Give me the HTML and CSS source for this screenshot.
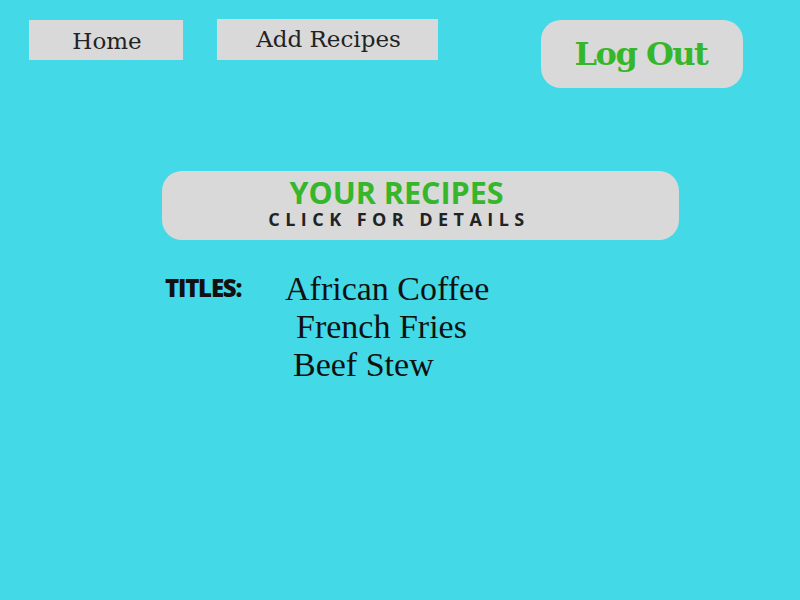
FILE: index.html
```html
<!DOCTYPE html>
<html>
<head>
<meta charset="utf-8">
<link rel="stylesheet" href="styles.css">
</head>
<body>
<header class="topbar">
  <a class="nav-btn home">Home</a>
  <a class="nav-btn add">Add Recipes</a>
  <a class="logout">Log Out</a>
</header>
<section class="panel">
  <h1 class="panel-title">YOUR RECIPES</h1>
  <p class="panel-sub">CLICK FOR DETAILS</p>
</section>
<section class="titles">
  <div class="label">TITLES:</div>
  <ul class="list">
    <li class="item i1">African Coffee</li>
    <li class="item i2">French Fries</li>
    <li class="item i3">Beef Stew</li>
  </ul>
</section>
</body>
</html>
```
FILE: styles.css
```css
html, body { margin: 0; padding: 0; }
body {
  width: 800px;
  height: 600px;
  background: #43d9e6;
  overflow: hidden;
  font-family: "Liberation Serif", serif;
}
.topbar {
  display: flex;
  align-items: flex-start;
  padding-top: 19px;
}
.nav-btn {
  display: flex;
  align-items: center;
  justify-content: center;
  background: #d9d9d9;
  color: #222;
  font-family: "DejaVu Serif", serif;
  font-size: 23px;
  box-sizing: border-box;
}
.home { margin-left: 29px; margin-top: 1px; width: 154px; height: 40px; padding-top: 2px; padding-left: 2px; }
.add { margin-left: 34px; width: 221px; height: 41px; padding-bottom: 2px; padding-left: 2px; }
.logout {
  margin-left: 103px;
  margin-top: 1px;
  width: 202px;
  height: 68px;
  border-radius: 20px;
  background: #d9d9d9;
  color: #35b62b;
  display: flex;
  align-items: center;
  justify-content: center;
  font-family: "DejaVu Serif", serif;
  font-weight: bold;
  font-size: 32px;
  letter-spacing: -1.5px;
  padding-right: 2px;
  box-sizing: border-box;
}
.panel {
  margin: 83px 0 0 162px;
  width: 517px;
  height: 69px;
  border-radius: 20px;
  background: #d9d9d9;
  box-sizing: border-box;
  padding: 3px 48px 0 0;
  display: flex;
  flex-direction: column;
  align-items: center;
}
.panel-title {
  margin: 0;
  font-family: "Open Sans", sans-serif;
  font-weight: 700;
  font-size: 30.5px;
  line-height: 36px;
  color: #35b62b;
}
.panel-sub {
  margin: 0;
  font-family: "Open Sans", sans-serif;
  font-weight: 700;
  font-size: 18px;
  line-height: 18px;
  letter-spacing: 5.45px;
  color: #222;
  padding-left: 5px;
}
.titles {
  display: flex;
  align-items: flex-start;
  margin: 31px 0 0 165px;
}
.label {
  font-family: "Open Sans", sans-serif;
  font-weight: 800;
  font-size: 24px;
  line-height: 34px;
  letter-spacing: -1.2px;
  color: #111;
  width: 120px;
}
.list { list-style: none; margin: 0; padding: 0; }
.item {
  font-family: "Liberation Serif", serif;
  font-size: 34px;
  line-height: 38px;
  color: #111;
}
.i1 { margin-top: -1px; }
.i2 { margin-left: 11px; }
.i3 { margin-left: 8px; }
```
